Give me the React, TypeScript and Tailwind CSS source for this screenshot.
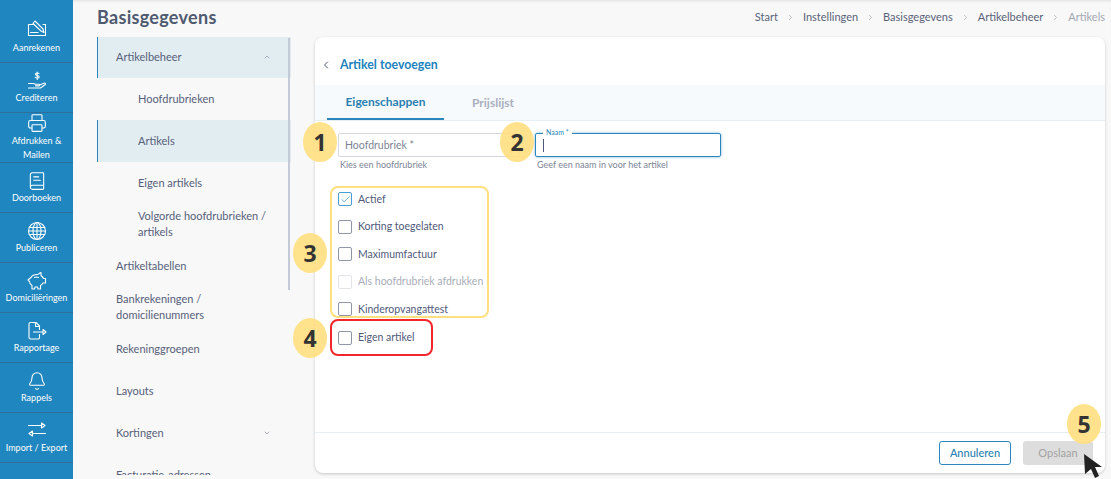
import { Bell, BookText, Check, ChevronDown, ChevronLeft, ChevronRight, ChevronUp, Printer } from "lucide-react";
import type { ReactNode } from "react";

function NavSvg({ children }: { children: ReactNode }) {
  return (
    <svg width="20" height="20" viewBox="0 0 20 20" fill="none" stroke="currentColor" strokeWidth="1.1" strokeLinejoin="round" strokeLinecap="round">
      {children}
    </svg>
  );
}

const PenBox = () => (
  <NavSvg>
    <path d="M6 4.500H1.500v11h17v-11H16" />
    <path d="M8 1 6 3.500 14 11l3 1.500L16 9z" />
    <path d="M3.500 12.500H11" />
  </NavSvg>
);

const HandCoin = () => (
  <NavSvg>
    <path d="M12 2.500c-.6-.7-3.500-.9-3.500.7 0 1.800 3.700 1 3.700 2.700 0 1.500-3 1.400-4 .5M10.200 1v7.500" />
    <path d="M1.500 12.500h5c1 0 1.500.8 2.500.8h3c1 0 1 1.600 0 1.600H8.500" />
    <path d="M12.500 14l4.500-1.800c1.300-.4 2 .8 1 1.500l-4.500 3.300h-12" />
  </NavSvg>
);

const Transfer = () => (
  <NavSvg>
    <path d="M1.500 4.500h13M14.500 2v5L18 4.500z" />
    <path d="M18.500 12.500H5.500M5.500 10v5L2 12.500z" />
  </NavSvg>
);

const GlobeLines = () => (
  <NavSvg>
    <circle cx="10" cy="10" r="8.500" />
    <ellipse cx="10" cy="10" rx="4" ry="8.500" />
    <path d="M10 1.500v17M2.200 6.500h15.600M2.200 13.500h15.600M1.500 10h17" />
  </NavSvg>
);

const Piggy = () => (
  <NavSvg>
    <path d="M4 6.500C5 4.500 8 3.500 10.500 3.500c1 0 1.500-1.500 3.500-2v3c1 .8 2 1.800 2.500 3h2v4.500H16c-.5 1-1.500 2-2.500 2.500V18H11l-.5-2H8l-.5 2H5v-3.500C3.500 13.500 2.500 12 2.500 10.500L1 9z" />
    <path d="M7.500 6.500c1.500-.6 3-.6 4 0" />
  </NavSvg>
);

const FileArrow = () => (
  <NavSvg>
    <path d="M12.500 8.500V5L9 1.500H3.500A1.500 1.500 0 0 0 2 3v13.500A1.500 1.500 0 0 0 3.500 18h7.500a1.500 1.500 0 0 0 1.500-1.500v-3" />
    <path d="M8.500 1.500v4h4" />
    <path d="M6.500 11h9.500M16 8.500v5l3-2.500z" />
  </NavSvg>
);

const navItems: { label: ReactNode; icon: ReactNode }[] = [
  { label: "Aanrekenen", icon: <PenBox /> },
  { label: "Crediteren", icon: <HandCoin /> },
  { label: <>Afdrukken &amp;<br />Mailen</>, icon: <Printer size={20} strokeWidth={1.3} /> },
  { label: "Doorboeken", icon: <BookText size={20} strokeWidth={1.3} /> },
  { label: "Publiceren", icon: <GlobeLines /> },
  { label: "Domiciliëringen", icon: <Piggy /> },
  { label: "Rapportage", icon: <FileArrow /> },
  { label: "Rappels", icon: <Bell size={20} strokeWidth={1.3} /> },
  { label: "Import / Export", icon: <Transfer /> },
];

const crumbs = ["Start", "Instellingen", "Basisgegevens", "Artikelbeheer"];

function MenuRow({ children, active, sub, h = "h-[42px]", icon }: { children: ReactNode; active?: boolean; sub?: boolean; h?: string; icon?: ReactNode }) {
  const pad = sub ? (active ? "border-l border-[#2a86bd] bg-[#e2edf2] pl-10" : "pl-[41px]") : active ? "border-l border-[#2a86bd] bg-[#e2edf2] pl-[18px]" : "pl-[19px]";
  return (
    <div className={`${h} flex shrink-0 items-center justify-between pr-5 text-[11px] leading-4 text-[#56607a] ${pad}`}>
      <span>{children}</span>
      {icon}
    </div>
  );
}

function CheckRow({ label, checked, disabled }: { label: string; checked?: boolean; disabled?: boolean }) {
  return (
    <div className="flex h-[14px] items-center gap-[6px]">
      <span className={`flex h-[14px] w-[14px] shrink-0 items-center justify-center rounded-[2px] border ${checked ? "border-[#4a9fd0]" : disabled ? "border-[#e2e4e8]" : "border-[#8f96aa]"}`}>
        {checked && <Check size={11} strokeWidth={1.5} className="text-[#2a86bd]" />}
      </span>
      <span className={`whitespace-nowrap pt-px text-[10.5px] ${disabled ? "text-[#a9adb8]" : "text-[#50597a]"}`}>{label}</span>
    </div>
  );
}

function Badge({ n, className }: { n: number; className: string }) {
  return (
    <span className={`absolute flex h-10 w-[34px] items-center justify-center rounded-[50%] bg-[#ffdf7e]/90 font-['Open_Sans',sans-serif] text-[23px] font-bold text-[#333] ${className}`}>
      {n}
    </span>
  );
}

export default function App() {
  return (
    <div className="relative flex h-[479px] w-[1111px] overflow-hidden bg-[#f8f8f8] font-['Lato',sans-serif]">
      <nav className="flex w-[73px] shrink-0 flex-col bg-[#1f86c0] pt-3 text-white">
        {navItems.map((item, i) => (
          <div key={i} className={`flex shrink-0 flex-col items-center border-b border-[#2e6f9c] text-center text-[9px] leading-[14px] ${i === 2 ? "pt-0" : "pt-[8px]"} ${i === 0 ? "h-[51px]" : "h-[50px]"}`}>
            <span className={`h-5 ${i === 0 || i === 2 ? "mb-px" : ""}`}>{item.icon}</span>
            <span>{item.label}</span>
          </div>
        ))}
      </nav>

      <div className="flex min-w-0 flex-1 flex-col">
        <header className="flex h-[37px] shrink-0 items-center justify-between pb-[2px] pl-6 pr-[6px] shadow-[inset_0_3px_3px_-2px_rgba(0,0,0,0.1)]">
          <h1 className="text-[18px] font-bold tracking-[0.3px] text-[#4f5a70]">Basisgegevens</h1>
          <div className="flex items-center gap-2 text-[11px] text-[#5a6378]">
            {crumbs.map((c) => (
              <span key={c} className="flex items-center gap-2">
                {c}
                <ChevronRight size={9} className="text-[#a8acb5]" />
              </span>
            ))}
            <span className="text-[#a4a8b2]">Artikels</span>
          </div>
        </header>

        <div className="flex min-h-0 flex-1 pl-6 pr-[6px]">
          <aside className="relative h-[438px] w-[194px] shrink-0 overflow-hidden">
            <MenuRow active h="h-[41px] pb-[2px]" icon={<ChevronUp size={8} className="text-[#8a90a0]" />}>Artikelbeheer</MenuRow>
            <MenuRow sub>Hoofdrubrieken</MenuRow>
            <MenuRow sub active>Artikels</MenuRow>
            <MenuRow sub h="h-[41px]">Eigen artikels</MenuRow>
            <MenuRow sub>Volgorde hoofdrubrieken / artikels</MenuRow>
            <MenuRow h="h-[41px]">Artikeltabellen</MenuRow>
            <MenuRow>Bankrekeningen / domicilienummers</MenuRow>
            <MenuRow>Rekeninggroepen</MenuRow>
            <MenuRow>Layouts</MenuRow>
            <MenuRow icon={<ChevronDown size={8} className="text-[#8a90a0]" />}>Kortingen</MenuRow>
            <MenuRow>Facturatie-adressen</MenuRow>
            <span className="absolute right-[1px] top-[1px] h-[252px] w-[2px] bg-[#c4c9d6]" />
          </aside>

          <main className="ml-6 flex h-[436px] flex-1 flex-col rounded-lg bg-white shadow-[0_1px_3px_rgba(0,0,0,0.2)]">
            <div className="flex h-12 shrink-0 items-center gap-2 pl-[5px] pt-2">
              <ChevronLeft size={12} className="text-[#4f5a70]" />
              <span className="text-[12.3px] font-bold text-[#2083bd]">Artikel toevoegen</span>
            </div>
            <div className="flex h-9 shrink-0 border-b border-[#e6eff4] bg-[#f6fafc] pl-3 text-[12px] font-bold">
              <span className="flex w-[117px] items-center justify-center border-b-2 border-[#2a86bd] text-[#2a7fb0]">Eigenschappen</span>
              <span className="ml-7 flex items-center text-[#a9afbc]">Prijslijst</span>
            </div>

            <div className="flex-1 pl-[23px] pt-3">
              <div className="flex gap-[15px]">
                <div className="w-[182px]">
                  <div className="flex h-6 items-center rounded-[2px] border border-[#d5d7de] pl-[6px] pt-[2px] text-[10.5px] text-[#7d8495]">Hoofdrubriek *</div>
                  <p className="mt-[2px] pl-[2px] text-[9px] leading-3 text-[#7d8495]">Kies een hoofdrubriek</p>
                </div>
                <div className="relative w-[186px]">
                  <span className="absolute left-2 top-[-5px] bg-white px-[3px] text-[7px] leading-[8px] text-[#2a86bd]">Naam *</span>
                  <div className="flex h-6 items-center rounded-[2px] border border-[#2a86bd] pl-[7px] shadow-[0_0_3px_rgba(42,134,189,0.6)]">
                    <span className="h-[13px] w-px bg-[#50597a]" />
                  </div>
                  <p className="mt-[2px] pl-[2px] text-[9px] leading-3 text-[#7d8495]">Geef een naam in voor het artikel</p>
                </div>
              </div>

              <div className="-ml-2 mt-[15px] flex h-[132px] w-[159px] flex-col gap-[13.5px] rounded-lg border-2 border-[#ffdf7e] px-[6px] pt-[4px]">
                <CheckRow label="Actief" checked />
                <CheckRow label="Korting toegelaten" />
                <CheckRow label="Maximumfactuur" />
                <CheckRow label="Als hoofdrubriek afdrukken" disabled />
                <CheckRow label="Kinderopvangattest" />
              </div>
              <div className="-ml-2 mt-[1px] flex h-[37px] w-[103px] items-center rounded-lg border-2 border-[#f0262c] px-[6px]">
                <CheckRow label="Eigen artikel" />
              </div>
            </div>

            <footer className="flex h-[41px] shrink-0 items-center justify-end gap-3 border-t border-[#e6eff4] pr-3">
              <button type="button" className="h-6 w-[72px] rounded-[3px] border border-[#2a86bd] text-[11px] font-medium text-[#2a7fb0]">Annuleren</button>
              <button type="button" className="h-6 w-[70px] rounded-[3px] bg-[#dddddd] text-[11px] text-[#a3a3a3]">Opslaan</button>
            </footer>
          </main>
        </div>
      </div>

      <Badge n={1} className="left-[303px] top-[122px]" />
      <Badge n={2} className="left-[500px] top-[122px]" />
      <Badge n={3} className="left-[293px] top-[233px]" />
      <Badge n={4} className="left-[293px] top-[318px]" />
      <Badge n={5} className="left-[1067px] top-[404px]" />
      <svg className="absolute left-[1083px] top-[453px]" width="20" height="26" viewBox="0 0 20 26">
        <path d="M1 1 19 14h-7l4 9-4 2-4-9-6 5z" fill="#222" />
      </svg>
    </div>
  );
}
